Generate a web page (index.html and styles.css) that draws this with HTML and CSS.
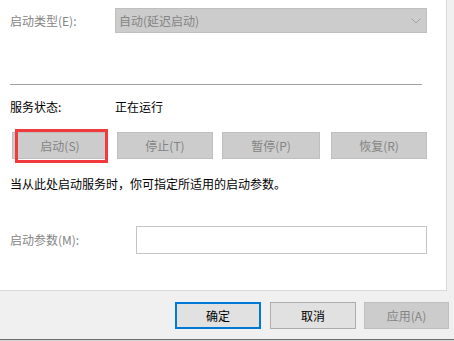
FILE: index.html
```html
<!DOCTYPE html>
<html lang="zh-CN">
<head>
<meta charset="utf-8">
<title>服务属性</title>
<link rel="stylesheet" href="styles.css">
</head>
<body>
<div class="page">
  <div class="panel">
    <div class="row-type">
      <span class="label disabled w105">启动类型(E):</span>
      <div class="combo">
        <span>自动(延迟启动)</span>
        <svg class="chev" width="10" height="6" viewBox="0 0 10 6"><path d="M0.5 0.5 L5 5 L9.5 0.5" fill="none" stroke="#a6a6a6" stroke-width="1"/></svg>
      </div>
    </div>
    <div class="sep"></div>
    <div class="status">
      <span class="label w105">服务状态:</span>
      <span>正在运行</span>
    </div>
    <div class="btns">
      <button class="sbtn">启动(S)</button>
      <button class="sbtn">停止(T)</button>
      <button class="sbtn wide">暂停(P)</button>
      <button class="sbtn">恢复(R)</button>
    </div>
    <p class="desc">当从此处启动服务时，你可指定所适用的启动参数。</p>
    <div class="param">
      <span class="label disabled w126">启动参数(M):</span>
      <div class="input"></div>
    </div>
    <div class="mark"></div>
  </div>
  <div class="footer">
    <button class="fbtn ok">确定</button>
    <button class="fbtn">取消</button>
    <button class="fbtn off">应用(A)</button>
  </div>
  <div class="bottom"></div>
</div>
</body>
</html>
```
FILE: styles.css
```css
html, body {
  margin: 0;
  padding: 0;
}
body {
  background: #f0f0f0;
  font-family: "Noto Sans CJK SC", "Noto Sans", sans-serif;
  font-size: 12px;
  line-height: 16px;
  color: #000;
  width: 454px;
  height: 341px;
  overflow: hidden;
}
.page {
  width: 454px;
  height: 341px;
  display: flex;
  flex-direction: column;
}
.panel {
  position: relative;
  width: 447px;
  height: 291px;
  box-sizing: border-box;
  background: #fff;
  border-right: 1px solid #d9d9d9;
  border-bottom: 1px solid #d9d9d9;
  padding: 8px 0 0 10px;
}
.label { flex: none; }
.w105 { width: 105px; }
.w126 { width: 126px; }
.disabled { color: #848484; }
.row-type {
  display: flex;
  align-items: center;
  height: 25px;
}
.combo {
  width: 312px;
  height: 25px;
  box-sizing: border-box;
  background: #cccccc;
  border: 1px solid #bfbfbf;
  color: #848484;
  display: flex;
  align-items: center;
  justify-content: space-between;
  padding: 0 5px 0 3px;
}
.chev { display: block; }
.sep {
  margin-top: 51px;
  width: 412px;
  height: 1px;
  background: #a0a0a0;
}
.status {
  display: flex;
  margin-top: 14px;
  height: 16px;
}
.btns {
  display: flex;
  gap: 9px;
  margin-top: 17px;
  padding-left: 2px;
}
.sbtn {
  width: 96px;
  height: 27px;
  box-sizing: border-box;
  background: #cccccc;
  border: 1px solid #bfbfbf;
  color: #848484;
  font: inherit;
  padding: 0;
  margin: 0;
}
.sbtn.wide { width: 98px; margin-right: 2px; }
.desc {
  margin: 17px 0 0;
  height: 16px;
}
.param {
  display: flex;
  align-items: center;
  margin-top: 34px;
}
.input {
  width: 291px;
  height: 28px;
  box-sizing: border-box;
  border: 1px solid #c4c4c4;
  background: #fff;
}
.mark {
  position: absolute;
  left: 15px;
  top: 129px;
  width: 93px;
  height: 34px;
  box-sizing: border-box;
  border: 3px solid #f03a3d;
}
.footer {
  height: 48px;
  box-sizing: border-box;
  display: flex;
  padding: 11px 0 0 175px;
  gap: 9px;
}
.fbtn {
  width: 86px;
  height: 27px;
  box-sizing: border-box;
  background: #e1e1e1;
  border: 1px solid #adadad;
  font: inherit;
  color: #000;
  padding: 0;
  margin: 0;
}
.fbtn.ok {
  border: 2px solid #0078d7;
}
.fbtn.off {
  width: 85px;
  margin-left: -1px;
  background: #cccccc;
  border-color: #bfbfbf;
  color: #848484;
}
.bottom {
  flex: 1;
  border-top: 1px solid #6e6e6e;
  background: #d6d6d6;
}
```
